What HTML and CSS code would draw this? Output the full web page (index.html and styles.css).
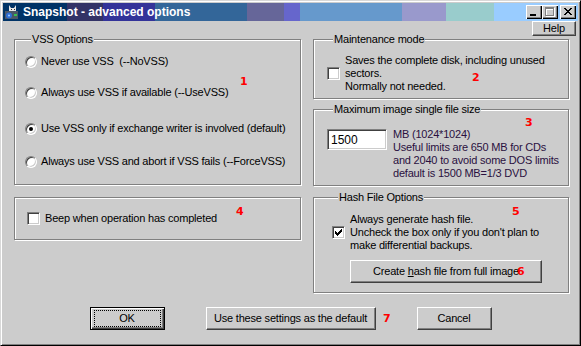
FILE: index.html
```html
<!DOCTYPE html>
<html lang="en">
<head>
    <meta charset="UTF-8">
    <title>Snapshot - advanced options</title>
    <link rel="stylesheet" href="styles.css">
</head>
<body>
    <div class="window">
        <div class="titlebar">
            <svg class="app-icon" width="16" height="16" viewBox="0 0 16 16">
                <rect x="1" y="7" width="13" height="8" fill="#4a5868"/>
                <path d="M5 1l2 3h3l2-3v6H5z" fill="#e8e8e8"/>
                <rect x="7" y="5" width="1" height="1" fill="#333"/>
                <rect x="10" y="5" width="1" height="1" fill="#333"/>
                <circle cx="5" cy="11.5" r="3" fill="#2f6fd8"/>
                <circle cx="5" cy="11.5" r="1" fill="#9fd0ff"/>
                <rect x="10" y="10" width="3" height="2" fill="#36c050"/>
            </svg>
            <span class="title">Snapshot - advanced options</span>
            <div class="caption-buttons">
                <span class="cap-btn">
                    <svg width="16" height="14" shape-rendering="crispEdges"><rect x="4" y="9" width="6" height="2" fill="#000"/></svg>
                </span>
                <span class="cap-btn">
                    <svg width="16" height="14" shape-rendering="crispEdges">
                        <g fill="#fff"><rect x="4" y="3" width="9" height="2"/><rect x="4" y="3" width="1" height="9"/><rect x="12" y="3" width="1" height="9"/><rect x="4" y="11" width="9" height="1"/></g>
                        <g fill="#808080"><rect x="3" y="2" width="9" height="2"/><rect x="3" y="2" width="1" height="9"/><rect x="11" y="2" width="1" height="9"/><rect x="3" y="10" width="9" height="1"/></g>
                    </svg>
                </span>
                <span class="cap-btn close">
                    <svg width="16" height="14" shape-rendering="crispEdges">
                        <g fill="#000">
                            <rect x="4" y="3" width="2" height="1"/><rect x="10" y="3" width="2" height="1"/>
                            <rect x="5" y="4" width="2" height="1"/><rect x="9" y="4" width="2" height="1"/>
                            <rect x="6" y="5" width="4" height="1"/>
                            <rect x="7" y="6" width="2" height="1"/>
                            <rect x="6" y="7" width="4" height="1"/>
                            <rect x="5" y="8" width="2" height="1"/><rect x="9" y="8" width="2" height="1"/>
                            <rect x="4" y="9" width="2" height="1"/><rect x="10" y="9" width="2" height="1"/>
                        </g>
                    </svg>
                </span>
            </div>
        </div>

        <div class="client">
            <div class="help-row">
                <button class="btn help-btn" type="button">Help</button>
            </div>

            <div class="columns">
                <div class="column">
                    <fieldset class="group vss">
                        <legend>VSS Options</legend>
                        <label class="radio-row r1"><span class="radio"></span>Never use VSS&nbsp; (--NoVSS)</label>
                        <label class="radio-row r2"><span class="radio"></span>Always use VSS if available (--UseVSS)</label>
                        <label class="radio-row r3"><span class="radio checked"></span>Use VSS only if exchange writer is involved (default)</label>
                        <label class="radio-row r4"><span class="radio"></span>Always use VSS and abort if VSS fails (--ForceVSS)</label>
                    </fieldset>
                    <fieldset class="group beep">
                        <label class="check-row"><span class="checkbox"></span>Beep when operation has completed</label>
                    </fieldset>
                </div>

                <div class="column">
                    <fieldset class="group maintenance">
                        <legend>Maintenance mode</legend>
                        <label class="check-row">
                            <span class="checkbox"></span>
                            <span class="lines">Saves the complete disk, including unused<br>sectors.<br>Normally not needed.</span>
                        </label>
                    </fieldset>
                    <fieldset class="group max-size">
                        <legend>Maximum image single file size</legend>
                        <div class="size-row">
                            <input class="edit" type="text" value="1500">
                            <span class="lines size-note">MB (1024*1024)<br>Useful limits are 650 MB for CDs<br>and 2040 to avoid some DOS limits<br>default is 1500 MB=1/3 DVD</span>
                        </div>
                    </fieldset>
                    <fieldset class="group hash">
                        <legend>Hash File Options</legend>
                        <label class="check-row">
                            <span class="checkbox">
                                <svg width="7" height="7" viewBox="0 0 7 7" shape-rendering="crispEdges"><path d="M0 2h1v1h1v1h1V3h1V2h1V1h1V0h1v3h-1v1h-1v1h-1v1h-1v1h-1V6H1V5H0z" fill="#000"/></svg>
                            </span>
                            <span class="lines">Always generate hash file.<br>Uncheck the box only if you don't plan to<br>make differential backups.</span>
                        </label>
                        <button class="btn hash-btn" type="button">Create <u>h</u>ash file from full image</button>
                    </fieldset>
                </div>
            </div>

            <div class="button-row">
                <button class="btn btn-default" type="button"><span class="focus">OK</span></button>
                <button class="btn btn-wide" type="button">Use these settings as the default</button>
                <button class="btn" type="button">Cancel</button>
            </div>
        </div>

        <!-- red annotation numbers drawn over the dialog -->
        <span class="mark m1">1</span>
        <span class="mark m2">2</span>
        <span class="mark m3">3</span>
        <span class="mark m4">4</span>
        <span class="mark m5">5</span>
        <span class="mark m6">6</span>
        <span class="mark m7">7</span>
    </div>
</body>
</html>
```

FILE: styles.css
```css
body {
    margin: 0;
    background: #cccccc;
    font-family: "Liberation Sans", Arial, sans-serif;
    font-size: 11px;
    line-height: 13px;
    letter-spacing: -0.2px;
    color: #000;
}
.window {
    position: relative;
    width: 581px;
    height: 346px;
    box-sizing: border-box;
    padding: 2px;
    background: #cccccc;
    border: 1px solid;
    border-color: #d8d8d8 #000 #000 #d8d8d8;
    box-shadow: inset 1px 1px #fff, inset -1px -1px #808080;
}
.titlebar {
    display: flex;
    align-items: center;
    height: 18px;
    padding: 0 2px 0 1px;
    background: linear-gradient(to right,
        #003366 0 64px, #333366 64px 100px, #333399 100px 152px,
        #336699 152px 244px, #666699 244px 281px, #6666cc 281px 297px,
        #6699cc 297px 399px, #9999cc 399px 443px, #99cccc 443px 491px,
        #99ccff 491px);
}
.app-icon {
    flex: none;
}
.title {
    margin-left: 3px;
    color: #fff;
    font-weight: bold;
    font-size: 12px;
    letter-spacing: 0;
    white-space: nowrap;
}
.caption-buttons {
    display: flex;
    margin-left: auto;
}
.cap-btn {
    display: block;
    width: 16px;
    height: 14px;
    background: #cccccc;
    box-shadow: inset 1px 1px #fff, inset -1px -1px #000, inset -2px -2px #808080;
}
.cap-btn svg {
    display: block;
}
.cap-btn.close {
    margin-left: 2px;
}

.help-row {
    display: flex;
    justify-content: flex-end;
    padding-right: 2px;
}
.btn {
    font: inherit;
    letter-spacing: inherit;
    color: #000;
    background: #cccccc;
    height: 23px;
    padding: 0;
    box-sizing: border-box;
    border: 1px solid;
    border-color: #fff #404040 #404040 #fff;
    box-shadow: inset -1px -1px #808080;
    white-space: nowrap;
}
.help-btn {
    width: 44px;
    height: 15px;
    line-height: 11px;
}

.columns {
    display: grid;
    grid-template-columns: 287px 256px;
    column-gap: 12px;
    align-items: start;
    margin-top: -3px;
    padding-left: 11px;
}
.column {
    display: flex;
    flex-direction: column;
}
.group {
    margin: 0;
    padding: 0;
    min-width: 0;
    border: 1px solid #808080;
    box-shadow: inset 1px 1px #fff, 1px 1px #fff;
}
.group legend {
    margin-left: 6px;
    padding: 0 1px;
    background: #cccccc;
    line-height: 13px;
}

.radio-row,
.check-row {
    display: flex;
    align-items: center;
    white-space: nowrap;
}
.radio {
    position: relative;
    flex: none;
    width: 12px;
    height: 12px;
    box-sizing: border-box;
    margin-right: 4px;
    border-radius: 50%;
    background: #fff;
    border: 1px solid;
    border-color: #808080 #fff #fff #808080;
    box-shadow: inset 1px 1px #404040, inset -1px -1px #cccccc;
}
.radio.checked::after {
    content: "";
    position: absolute;
    left: 3px;
    top: 3px;
    width: 4px;
    height: 4px;
    border-radius: 50%;
    background: #000;
}
.checkbox {
    flex: none;
    display: flex;
    align-items: center;
    justify-content: center;
    width: 13px;
    height: 13px;
    box-sizing: border-box;
    margin-right: 5px;
    background: #fff;
    border: 1px solid;
    border-color: #808080 #fff #fff #808080;
    box-shadow: inset 1px 1px #404040, inset -1px -1px #cccccc;
}
.checkbox svg {
    display: block;
}

.vss {
    padding: 9px 0 16px 10px;
}
.vss .r2 { margin-top: 18px; }
.vss .r3 { margin-top: 23px; }
.vss .r4 { margin-top: 20px; }

.beep {
    margin-top: 12px;
    padding: 14px 0 14px 12px;
}

.maintenance {
    padding: 8px 0 5px 13px;
}
.max-size {
    margin-top: 4px;
    padding: 12px 0 5px 13px;
}
.size-row {
    display: flex;
    align-items: flex-start;
}
.edit {
    width: 60px;
    height: 21px;
    box-sizing: border-box;
    margin: 1px 6px 0 0;
    padding: 0 3px;
    font-family: inherit;
    font-size: 12px;
    background: #fff;
    border: 1px solid;
    border-color: #808080 #fff #fff #808080;
    box-shadow: inset 1px 1px #404040, inset -1px -1px #cccccc;
    outline: none;
}
.size-note {
    color: #2a1040;
    white-space: nowrap;
}
.hash {
    margin-top: 5px;
    padding: 9px 0 9px 18px;
}
.hash-btn {
    width: 192px;
    margin: 8px 0 0 18px;
}

.button-row {
    display: flex;
    justify-content: center;
    gap: 41px;
    margin-top: 14px;
}
.button-row .btn {
    width: 75px;
}
.button-row .btn-wide {
    width: 170px;
}
.btn-default {
    border: 1px solid #000;
    box-shadow: inset 1px 1px #fff, inset -1px -1px #404040, inset -2px -2px #808080;
}
.focus {
    display: block;
    margin: 1px 3px;
    border: 1px dotted #000;
    line-height: 15px;
}

.mark {
    position: absolute;
    color: #ff0000;
    font-family: "DejaVu Sans", sans-serif;
    font-weight: 900;
    font-size: 11px;
    line-height: 11px;
    letter-spacing: 0;
}
.m1 { left: 239px; top: 75px; }
.m2 { left: 471px; top: 71px; }
.m3 { left: 524px; top: 116px; }
.m4 { left: 235px; top: 205px; }
.m5 { left: 511px; top: 205px; }
.m6 { left: 516px; top: 265px; }
.m7 { left: 382px; top: 312px; }
```
